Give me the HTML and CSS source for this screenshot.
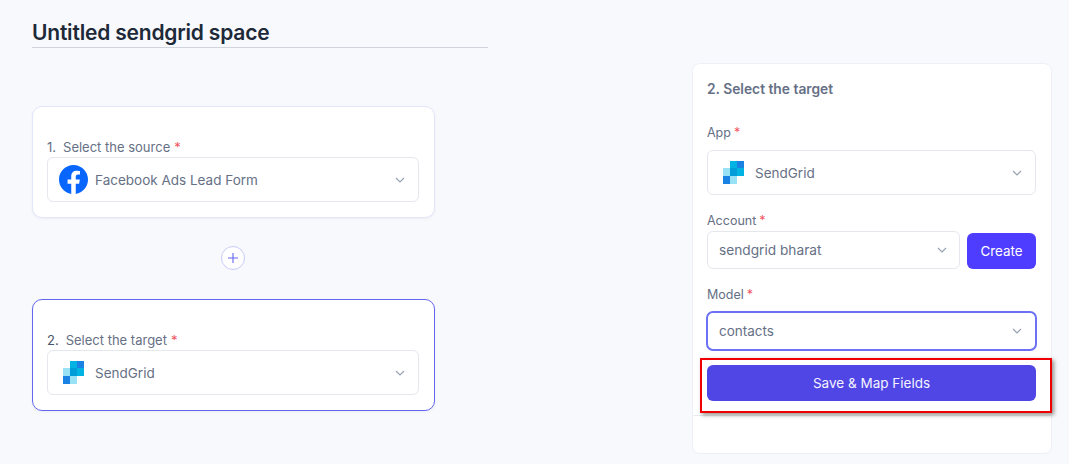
FILE: index.html
```html
<!DOCTYPE html>
<html lang="en">
<head>
<meta charset="utf-8">
<title>Untitled sendgrid space</title>
<link rel="stylesheet" href="styles.css">
</head>
<body>
<div class="page">
  <main class="canvas">
    <h1 class="title">Untitled sendgrid space</h1>
    <section class="card card-source">
      <div class="step"><span class="num">1.</span><span>Select the source</span><span class="req">*</span></div>
      <div class="select select-lg">
        <svg class="fb" viewBox="0 0 24 24" aria-hidden="true"><circle cx="12" cy="12" r="12" fill="#fff"/><path fill="#0866ff" d="M24 12.073c0-6.627-5.373-12-12-12s-12 5.373-12 12c0 5.99 4.388 10.954 10.125 11.854v-8.385H7.078v-3.47h3.047V9.43c0-3.007 1.792-4.669 4.533-4.669 1.312 0 2.686.235 2.686.235v2.953H15.83c-1.491 0-1.956.925-1.956 1.874v2.25h3.328l-.532 3.47h-2.796v8.385C19.612 23.027 24 18.062 24 12.073z"/></svg>
        <span class="value">Facebook Ads Lead Form</span>
        <svg class="chev" viewBox="0 0 10 6" aria-hidden="true"><path d="M1 1l4 4 4-4"/></svg>
      </div>
    </section>
    <div class="add"><svg viewBox="0 0 12 12" aria-hidden="true"><path d="M6 1v10M1 6h10"/></svg></div>
    <section class="card card-target">
      <div class="step"><span class="num">2.</span><span>Select the target</span><span class="req">*</span></div>
      <div class="select select-lg">
        <svg class="sg" viewBox="0 0 21 23" aria-hidden="true"><rect x="7" y="0" width="7" height="8" fill="#00b3e3"/><rect x="14" y="0" width="7" height="8" fill="#1a82e2"/><rect x="0" y="7" width="7" height="8" fill="#99e1f4"/><rect x="7" y="7" width="7" height="8" fill="#009dd9"/><rect x="14" y="7" width="7" height="8" fill="#00b3e3"/><rect x="0" y="15" width="7" height="8" fill="#1a82e2"/><rect x="7" y="15" width="7" height="8" fill="#99e1f4"/></svg>
        <span class="value">SendGrid</span>
        <svg class="chev" viewBox="0 0 10 6" aria-hidden="true"><path d="M1 1l4 4 4-4"/></svg>
      </div>
    </section>
  </main>
  <aside class="panel">
    <div class="panel-body">
      <h2 class="panel-title">2. Select the target</h2>
      <div class="field field-app">
        <div class="label">App<span class="req">*</span></div>
        <div class="select select-lg">
          <svg class="sg" viewBox="0 0 21 23" aria-hidden="true"><rect x="7" y="0" width="7" height="8" fill="#00b3e3"/><rect x="14" y="0" width="7" height="8" fill="#1a82e2"/><rect x="0" y="7" width="7" height="8" fill="#99e1f4"/><rect x="7" y="7" width="7" height="8" fill="#009dd9"/><rect x="14" y="7" width="7" height="8" fill="#00b3e3"/><rect x="0" y="15" width="7" height="8" fill="#1a82e2"/><rect x="7" y="15" width="7" height="8" fill="#99e1f4"/></svg>
          <span class="value">SendGrid</span>
          <svg class="chev" viewBox="0 0 10 6" aria-hidden="true"><path d="M1 1l4 4 4-4"/></svg>
        </div>
      </div>
      <div class="field field-account">
        <div class="label">Account<span class="req">*</span></div>
        <div class="account-row">
          <div class="select select-sm">
            <span class="value">sendgrid bharat</span>
            <svg class="chev" viewBox="0 0 10 6" aria-hidden="true"><path d="M1 1l4 4 4-4"/></svg>
          </div>
          <button class="create" type="button">Create</button>
        </div>
      </div>
      <div class="field field-model">
        <div class="label">Model<span class="req">*</span></div>
        <div class="select select-focus">
          <span class="value">contacts</span>
          <svg class="chev" viewBox="0 0 10 6" aria-hidden="true"><path d="M1 1l4 4 4-4"/></svg>
        </div>
      </div>
      <div class="save-wrap">
        <button class="save" type="button">Save &amp; Map Fields</button>
        <div class="highlight"></div>
      </div>
    </div>
  </aside>
</div>
</body>
</html>
```
FILE: styles.css
```css
* { box-sizing: border-box; }
html, body { margin: 0; height: 100%; }
body {
  background: #f8f9fc;
  font-family: "Inter", "Liberation Sans", sans-serif;
  color: #667085;
  overflow: hidden;
}
.page {
  display: flex;
  justify-content: space-between;
  height: 464px;
  padding: 16px 17px 10px 32px;
}
.canvas { width: 456px; }
.title {
  margin: 0;
  height: 32px;
  padding-top: 1px;
  font-size: 21px;
  line-height: 31px;
  font-weight: 600;
  color: #1d2939;
  border-bottom: 1px solid #d0d5dd;
  letter-spacing: -0.2px;
}
.card {
  width: 403px;
  height: 112px;
  padding: 31px 15px 0 14px;
  background: #fff;
  border-radius: 10px;
  box-shadow: 0 1px 3px rgba(16, 24, 40, .05);
}
.card-source { margin-top: 58px; border: 1px solid #e3e6fb; }
.card-target { border: 1px solid #6366f1; }
.step {
  display: flex;
  height: 18px;
  margin-bottom: 1px;
  font-size: 13px;
  line-height: 18px;
  color: #667085;
}
.num { margin-right: 7px; }
.card-target .num { color: #475467; }
.req { color: #f2555f; margin-left: 4px; }
.label .req { margin-left: 3px; }
.select {
  display: flex;
  align-items: center;
  background: #fff;
  border: 1px solid #e4e7ec;
  border-radius: 6px;
  font-size: 13.5px;
  color: #667085;
}
.select-lg { height: 45px; padding: 0 13px 0 11px; }
.select-sm { flex: 0 0 253px; height: 38px; padding: 0 12px 0 11px; font-size: 13.7px; }
.select-focus {
  height: 40px;
  margin: 0 -1px;
  padding: 0 13px 0 11px;
  border: 2px solid #6b70f5;
  border-radius: 7px;
}
.value { flex: 1; }
.fb { width: 29px; height: 29px; margin-right: 7px; }
.sg { width: 21px; height: 23px; margin: 0 11px 0 4px; }
.chev { width: 10px; height: 6px; fill: none; stroke: #98a2b3; stroke-width: 1.2; }
.add {
  display: flex;
  align-items: center;
  justify-content: center;
  width: 24px;
  height: 24px;
  margin: 28px 0 29px 189px;
  background: #fff;
  border: 1px solid #c7cbfa;
  border-radius: 50%;
}
.add svg { width: 12px; height: 12px; fill: none; stroke: #6366f1; stroke-width: 1.1; }
.panel {
  width: 360px;
  margin-top: 47px;
  height: 391px;
  background: #fff;
  border: 1px solid #eef0f8;
  border-radius: 8px;
}
.panel-body {
  height: 352px;
  padding: 16px 15px 0 14px;
  border-bottom: 1px solid #eaecf0;
}
.panel-title {
  margin: 0;
  font-size: 13.8px;
  line-height: 18px;
  font-weight: 600;
  color: #667085;
}
.label {
  font-size: 12.5px;
  line-height: 18px;
  color: #667085;
}
.field-app { margin-top: 26px; }
.field-app .label { margin-bottom: 8px; }
.field-account { margin-top: 17px; }
.field-account .label { margin-bottom: 1px; }
.field-model { margin-top: 17px; }
.field-model .label { margin-bottom: 7px; }
.account-row { display: flex; align-items: flex-end; gap: 7px; }
.create {
  flex: 1;
  height: 36px;
  padding: 0;
  border: 0;
  border-radius: 6px;
  background: #4f3dff;
  color: #fff;
  font: 400 13.4px "Inter", "Liberation Sans", sans-serif;
}
.save-wrap { position: relative; margin-top: 14px; }
.save {
  display: block;
  width: 100%;
  height: 36px;
  padding: 0;
  border: 0;
  border-radius: 6px;
  background: #5046e5;
  color: #f4f3ff;
  font: 400 13.5px "Inter", "Liberation Sans", sans-serif;
}
.highlight {
  position: absolute;
  left: -7px;
  right: -16px;
  top: -7px;
  bottom: -12px;
  border: 2px solid #f00000;
  box-shadow: 2px 2px 4px rgba(60, 60, 50, .55);
}
```
